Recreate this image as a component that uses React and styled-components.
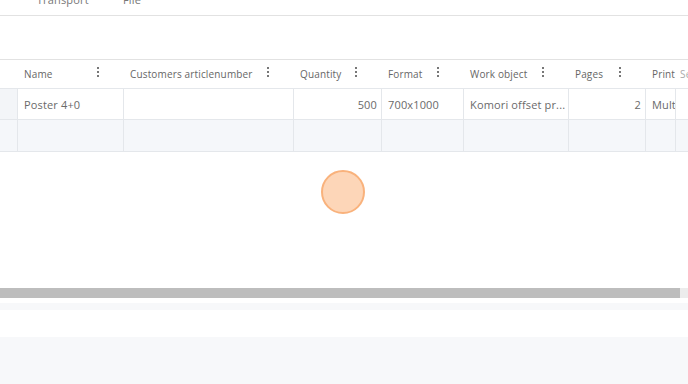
import React from "react";
import styled, { createGlobalStyle } from "styled-components";

const GlobalStyle = createGlobalStyle`
  html, body {
    margin: 0;
    padding: 0;
    background: #ffffff;
    font-family: "Open Sans", "Liberation Sans", sans-serif;
  }
`;

const Page = styled.div`
  width: 688px;
  height: 384px;
  overflow: hidden;
  position: relative;
  display: flex;
  flex-direction: column;
`;

const TabBar = styled.div`
  height: 15px;
  border-bottom: 1px solid #e2e2e2;
  display: flex;
  flex-direction: row;
  align-items: flex-end;
  overflow: hidden;
`;

const Tab = styled.span`
  margin-left: ${(props) => props.$offset}px;
  margin-bottom: 8px;
  font-size: 11px;
  letter-spacing: 0.2px;
  color: #777;
  white-space: nowrap;
`;

const Toolbar = styled.div`
  height: 43px;
  border-bottom: 1px solid #e2e2e2;
`;

const Grid = styled.div`
  display: flex;
  flex-direction: column;
  width: 688px;
  overflow: hidden;
`;

const Row = styled.div`
  display: flex;
  flex-direction: row;
  height: ${(props) => props.$h}px;
  background: ${(props) => props.$bg || "#fff"};
  border-bottom: 1px solid #e4e7eb;
  flex-shrink: 0;
`;

const HeadCell = styled.div`
  width: ${(props) => props.$w}px;
  min-width: 0;
  flex-shrink: 0;
  box-sizing: border-box;
  padding: 0 ${(props) => (props.$kebab ? 24 : 0)}px 0 ${(props) => (props.$w > 20 ? 7 : 0)}px;
  display: flex;
  flex-direction: row;
  align-items: center;
  justify-content: space-between;
  font-size: 10px;
  letter-spacing: 0.15px;
  color: #666;
  white-space: nowrap;
  overflow: ${(props) => (props.$clip ? "hidden" : "visible")};
`;

const Kebab = styled.span`
  display: flex;
  flex-direction: column;
  gap: 2px;
  margin-top: -4px;
  span {
    width: 2px;
    height: 2px;
    background: #777;
  }
`;

const Cell = styled.div`
  width: ${(props) => props.$w}px;
  flex-shrink: 0;
  box-sizing: border-box;
  padding: 0 ${(props) => (props.$right ? 4 : 0)}px 0 ${(props) => (props.$w > 20 ? 6 : 0)}px;
  border-left: ${(props) => (props.$first ? "none" : "1px solid #e4e7eb")};
  background: ${(props) => props.$bg || "transparent"};
  display: flex;
  align-items: center;
  justify-content: ${(props) => (props.$right ? "flex-end" : "flex-start")};
  font-size: 11px;
  letter-spacing: 0.15px;
  color: #6a6a6a;
  white-space: nowrap;
  overflow: hidden;
`;

const Spacer = styled.div`
  flex: 1;
`;

const ScrollTrack = styled.div`
  height: 10px;
  background: #ececec;
  display: flex;
  flex-shrink: 0;
`;

const ScrollThumb = styled.div`
  width: 680px;
  background: #bdbdbd;
`;

const Band = styled.div`
  height: ${(props) => props.$h}px;
  background: ${(props) => props.$bg};
  flex-shrink: 0;
`;

const Cursor = styled.div`
  position: absolute;
  left: 321px;
  top: 170px;
  width: 40px;
  height: 40px;
  border-radius: 50%;
  background: #fdd6b8;
  border: 2px solid #f9b27c;
`;

const FaintLabel = styled.span`
  color: #aaa;
  margin-left: -2px;
`;

const columns = [
  { w: 17, label: "" },
  { w: 106, label: "Name", kebab: true },
  { w: 170, label: "Customers articlenumber", kebab: true },
  { w: 88, label: "Quantity", kebab: true },
  { w: 82, label: "Format", kebab: true },
  { w: 105, label: "Work object", kebab: true },
  { w: 77, label: "Pages", kebab: true },
  { w: 30, label: "Print" },
  { w: 80, label: "Se", faint: true },
];

const rowData = ["", "Poster 4+0", "", "500", "700x1000", "Komori offset pr...", "2", "Mult", ""];
const rightAligned = [false, false, false, true, false, false, true, false, false];

const Dots = () => (
  <Kebab>
    <span />
    <span />
    <span />
  </Kebab>
);

export default function App() {
  return (
    <Page>
      <GlobalStyle />
      <TabBar>
        <Tab $offset={-4}>r</Tab>
        <Tab $offset={36}>Transport</Tab>
        <Tab $offset={34}>File</Tab>
      </TabBar>
      <Toolbar />
      <Grid>
        <Row $h={28}>
          {columns.map((c, i) => (
            <HeadCell key={i} $w={c.w} $kebab={c.kebab} $clip={i === columns.length - 1}>
              {c.faint ? <FaintLabel>{c.label}</FaintLabel> : <span>{c.label}</span>}
              {c.kebab && <Dots />}
            </HeadCell>
          ))}
        </Row>
        <Row $h={30}>
          {columns.map((c, i) => (
            <Cell
              key={i}
              $w={c.w}
              $first={i === 0}
              $right={rightAligned[i]}
              $bg={i === 0 ? "#f3f5f8" : undefined}
            >
              {rowData[i]}
            </Cell>
          ))}
        </Row>
        <Row $h={31} $bg="#f5f7fa">
          {columns.map((c, i) => (
            <Cell key={i} $w={c.w} $first={i === 0} />
          ))}
        </Row>
      </Grid>
      <Spacer />
      <ScrollTrack>
        <ScrollThumb />
      </ScrollTrack>
      <Band $h={5} $bg="#ffffff" />
      <Band $h={7} $bg="#f7f8fa" />
      <Band $h={27} $bg="#ffffff" />
      <Band $h={47} $bg="#f7f8fa" />
      <Cursor />
    </Page>
  );
}
